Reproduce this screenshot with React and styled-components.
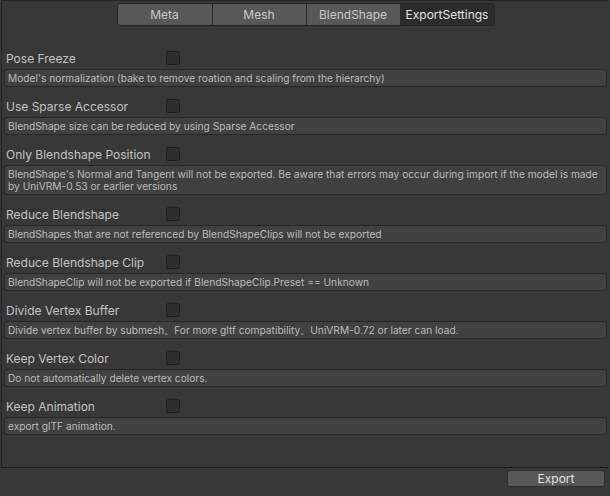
import React from "react";
import styled, { createGlobalStyle } from "styled-components";

const Global = createGlobalStyle`
  html, body { margin: 0; padding: 0; background: #383838; }
  body { font-family: Inter, "Noto Sans", "Liberation Sans", sans-serif; }
  * { box-sizing: border-box; }
`;

const Page = styled.div`
  width: 610px;
  height: 496px;
  display: flex;
  flex-direction: column;
  background: #383838;
  overflow: hidden;
`;

const Panel = styled.div`
  height: 468px;
  margin-left: 1px;
  margin-right: 2px;
  border-top: 1px solid #232323;
  border-left: 1px solid #232323;
  border-bottom: 1px solid #1e1e1e;
  padding: 2px 1px 0 2px;
  display: flex;
  flex-direction: column;
`;

const Tabs = styled.div`
  align-self: center;
  display: flex;
  height: 23px;
  border: 1px solid #242424;
  border-radius: 3px;
  overflow: hidden;
`;

const Tab = styled.div`
  width: 94px;
  display: flex;
  align-items: center;
  justify-content: center;
  font-size: 12px;
  color: ${(p) => (p.$active ? "#e4e4e4" : "#c8c8c8")};
  background: ${(p) => (p.$active ? "#2c2c2c" : "#585858")};
  border-left: ${(p) => (p.$first ? "none" : "1px solid #2a2a2a")};
`;

const List = styled.div`
  margin-top: 23px;
  display: flex;
  flex-direction: column;
`;

const Row = styled.div`
  display: flex;
  flex-direction: column;
  margin-bottom: 10px;
`;

const LabelLine = styled.div`
  height: 18px;
  display: flex;
  align-items: center;
  padding-left: 2px;
`;

const Label = styled.span`
  width: 160px;
  font-size: 12px;
  color: #c4c4c4;
`;

const Check = styled.span`
  width: 14px;
  height: 14px;
  border-radius: 2px;
  background: #2e2e2e;
  border: 1px solid #1f1f1f;
`;

const HelpBox = styled.div`
  margin-top: 2px;
  border: 1px solid #262626;
  border-radius: 3px;
  background: #404040;
  padding: 2px 3px;
  font-size: 10.2px;
  line-height: 12px;
  color: #bdbdbd;
  white-space: pre-line;
`;

const Footer = styled.div`
  display: flex;
  justify-content: flex-end;
  padding: 2px 5px 0 0;
`;

const Button = styled.div`
  width: 98px;
  height: 17px;
  border-radius: 3px;
  background: #585858;
  border: 1px solid #2e2e2e;
  display: flex;
  align-items: center;
  justify-content: center;
  font-size: 12px;
  color: #e2e2e2;
`;

const items = [
  ["Pose Freeze", "Model's normalization (bake to remove roation and scaling from the hierarchy)"],
  ["Use Sparse Accessor", "BlendShape size can be reduced by using Sparse Accessor"],
  [
    "Only Blendshape Position",
    "BlendShape's Normal and Tangent will not be exported. Be aware that errors may occur during import if the model is made\nby UniVRM-0.53 or earlier versions",
  ],
  ["Reduce Blendshape", "BlendShapes that are not referenced by BlendShapeClips will not be exported"],
  ["Reduce Blendshape Clip", "BlendShapeClip will not be exported if BlendShapeClip.Preset == Unknown"],
  ["Divide Vertex Buffer", "Divide vertex buffer by submesh。For more gltf compatibility。UniVRM-0.72 or later can load."],
  ["Keep Vertex Color", "Do not automatically delete vertex colors."],
  ["Keep Animation", "export glTF animation."],
];

const tabs = ["Meta", "Mesh", "BlendShape", "ExportSettings"];

export default function App() {
  return (
    <>
      <Global />
      <Page>
        <Panel>
          <Tabs>
            {tabs.map((t, i) => (
              <Tab key={t} $first={i === 0} $active={i === 3}>
                {t}
              </Tab>
            ))}
          </Tabs>
          <List>
            {items.map(([label, help]) => (
              <Row key={label}>
                <LabelLine>
                  <Label>{label}</Label>
                  <Check />
                </LabelLine>
                <HelpBox>{help}</HelpBox>
              </Row>
            ))}
          </List>
        </Panel>
        <Footer>
          <Button>Export</Button>
        </Footer>
      </Page>
    </>
  );
}
